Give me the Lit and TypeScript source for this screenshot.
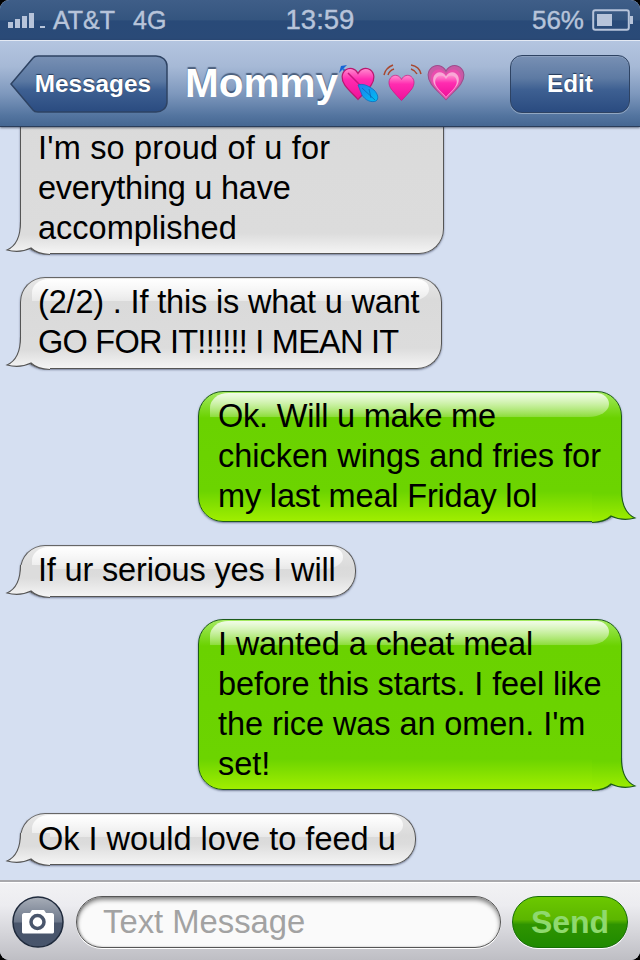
import { LitElement, html, css, svg } from "lit";
import { customElement } from "lit/decorators.js";

const heart = "M0 -9C-3 -15 -9 -16 -13 -13C-18 -9 -18 -2 -14 4C-10 10 -4 15 0 20C4 15 10 10 14 4C18 -2 18 -9 13 -13C9 -16 3 -15 0 -9Z";

interface Line { text: string; spacing: number }
interface Message { me: boolean; width: number; lines: Line[]; clipped?: boolean }

const messages: Message[] = [
  { me: false, clipped: true, width: 424, lines: [
    { text: "I'm so proud of u for", spacing: 0.2 },
    { text: "everything u have", spacing: -0.24 },
    { text: "accomplished", spacing: 0 },
  ] },
  { me: false, width: 422, lines: [
    { text: "(2/2) . If this is what u want", spacing: -0.17 },
    { text: "GO FOR IT!!!!!! I MEAN IT", spacing: -0.75 },
  ] },
  { me: true, width: 424, lines: [
    { text: "Ok. Will u make me", spacing: -0.22 },
    { text: "chicken wings and fries for", spacing: 0 },
    { text: "my last meal Friday lol", spacing: -0.17 },
  ] },
  { me: false, width: 336, lines: [{ text: "If ur serious yes I will", spacing: -0.17 }] },
  { me: true, width: 424, lines: [
    { text: "I wanted a cheat meal", spacing: -0.14 },
    { text: "before this starts. I feel like", spacing: -0.1 },
    { text: "the rice was an omen. I'm", spacing: -0.08 },
    { text: "set!", spacing: 0 },
  ] },
  { me: false, width: 396, lines: [{ text: "Ok I would love to feed u", spacing: 0 }] },
];

@customElement("app-root")
export class AppRoot extends LitElement {
  static styles = css`
    :host { display: block; width: 640px; height: 960px; background: #000; font-family: "Liberation Sans", Arial, sans-serif; overflow: hidden; }
    .screen { width: 640px; height: 960px; border-radius: 9px; overflow: hidden; display: flex; flex-direction: column; background: #d5dff1; }
    .status { height: 40px; flex: none; display: grid; grid-template-columns: 1fr auto 1fr; align-items: center; padding: 0 6px 0 8px; box-sizing: border-box;
      background: linear-gradient(#3f5e88 0%, #34557f 50%, #294a78 52%, #2a4a77 100%); color: #b7c4da; font-size: 25px; -webkit-text-stroke: 0.4px #b7c4da; }
    .status-left { display: flex; align-items: center; }
    .signal { display: block; margin-right: 7px; }
    .net { margin-left: 18px; }
    .time { font-size: 27.5px; margin-left: -2px; }
    .status-right { display: flex; justify-content: flex-end; align-items: center; gap: 8px; font-size: 26px; }
    .nav { height: 87px; flex: none; box-sizing: border-box; display: flex; align-items: center; justify-content: space-between; padding: 0 10px;
      border-top: 1px solid #e4eaf4; border-bottom: 1px solid #2a3d5a;
      background: linear-gradient(#b4c5e0 0%, #a6b9d6 30%, #7e98bd 62%, #53749f 88%, #456792 100%); box-shadow: 0 1px 2px rgba(30,40,60,.6); position: relative; z-index: 2; }
    .back { position: relative; width: 158px; height: 58px; flex: none; display: flex; align-items: center; justify-content: flex-end; padding-right: 17px; box-sizing: border-box; }
    .back svg { position: absolute; left: 0; top: 0; }
    .btn-label { position: relative; color: #fff; font-weight: 700; font-size: 24.3px; text-shadow: 0 -1px 1px rgba(20,40,70,.8); }
    .title { flex: 1; display: flex; align-items: center; padding-left: 17px; min-width: 0; }
    .title-text { color: #fff; font-weight: 700; font-size: 40.5px; text-shadow: 0 -2px 1px rgba(40,60,90,.7); }
    .emoji { display: block; flex: none; }
    .edit { width: 120px; height: 58px; flex: none; box-sizing: border-box; border-radius: 12px; border: 1.5px solid #2e4363; display: flex; align-items: center; justify-content: center;
      background: linear-gradient(#7890b4 0%, #5d7aa3 40%, #3e6092 60%, #2a4b80 100%); box-shadow: 0 1px 0 rgba(255,255,255,.35), inset 0 1px 0 rgba(255,255,255,.15); }
    .list { flex: 1; min-height: 0; overflow: hidden; display: flex; flex-direction: column; justify-content: flex-end; gap: 22.6px; padding: 0 18px 15px 20px; }
    .bubble { position: relative; flex: none; box-sizing: border-box; border-radius: 25px; font-size: 32.5px; line-height: 40px; color: #000; white-space: nowrap; border: 1px solid #555; box-shadow: 0 1px 2px rgba(40,50,80,.55); }
    .them { align-self: flex-start; padding: 4.5px 0 5.5px 17px; background: linear-gradient(#e8e8e8 0, #dadada 22px, #dcdcdc calc(100% - 20px), #f4f4f4 100%); border-top-color: #666; }
    .me { align-self: flex-end; padding: 4px 0 5px 19px; background: linear-gradient(#a4ea60 0, #6ad200 26px, #6cd400 calc(100% - 30px), #a0ee00 100%); border-color: #1d5a1c; }
    .clipped { padding-top: 60px; }
    .gloss { position: absolute; top: 1px; left: 11px; right: 12px; border-radius: 20px 14px 22px 0 / 16px 12px 14px 0; }
    .clipped .gloss { display: none; }
    .them .gloss { height: 22px; background: linear-gradient(rgba(255,255,255,.98), rgba(255,255,255,.4)); }
    .me .gloss { height: 24px; background: linear-gradient(rgba(255,255,255,.85), rgba(255,255,255,.22)); }
    .line { position: relative; display: block; }
    .tail { position: absolute; bottom: -2px; overflow: visible; }
    .them .tail { left: -15px; }
    .me .tail { right: -15px; transform: scaleX(-1); }
    .bar { height: 80px; flex: none; box-sizing: border-box; display: flex; align-items: flex-start; gap: 11px; padding: 14px 12px 0 12px; border-top: 2px solid #a8a8ac;
      background: linear-gradient(#f2f2f4 0%, #ececf0 30%, #bebec4 100%); box-shadow: inset 0 1px 0 #fff; }
    .camera { width: 52px; height: 52px; flex: none; display: block; margin-right: 1px; }
    .field { flex: 1; height: 52px; box-sizing: border-box; border-radius: 26px; border: 1.5px solid #555; background: #fafafa; box-shadow: inset 0 3px 4px rgba(0,0,0,.45), inset 1px 0 2px rgba(0,0,0,.25), 0 1px 0 #fff; display: flex; align-items: center; padding-left: 26px; font-size: 32.8px; color: #a2a2a2; }
    .send { width: 116px; height: 52px; flex: none; box-sizing: border-box; border-radius: 26px; border: 1.5px solid #166e06; display: flex; align-items: center; justify-content: center; font-weight: 700; font-size: 32px; color: #8fd96e;
      background: linear-gradient(#6cc800 0%, #5cb600 45%, #2f9400 55%, #1f8a00 100%); box-shadow: 0 1px 0 #fff; }
  `;

  private tail(m: Message) {
    const id = m.me ? "tg" : "tw";
    const top = m.me ? "#6cd400" : "#dcdcdc";
    const bottom = m.me ? "#a0ee00" : "#f6f6f6";
    const edge = m.me ? "#1d5a1c" : "#555";
    const start = m.me ? 6 : 16;
    return html`<svg class="tail" width="44" height="36" viewBox="0 0 44 36">
      <defs><linearGradient id="${id}" gradientUnits="userSpaceOnUse" x1="0" y1="${start}" x2="0" y2="35"><stop offset="0" stop-color="${top}"/><stop offset="1" stop-color="${bottom}"/></linearGradient></defs>
      <path d="M14.500 3C14.500 17 10 27 1 31C8 33 17 33 25 29C29 33 34 35 44 35.500L44 3Z" fill="url(#${id})"/>
      <path d="M14.500 3C14.500 17 10 27 1 31C8 33 17 33 25 29C29 33 34 35 44 35.500" fill="none" stroke="${edge}" stroke-width="1.100"/>
    </svg>`;
  }

  private bubble(m: Message) {
    return html`<div class="bubble ${m.me ? "me" : "them"} ${m.clipped ? "clipped" : ""}" style="width:${m.width}px">
      <span class="gloss"></span>
      ${this.tail(m)}
      ${m.lines.map((l) => html`<span class="line" style="letter-spacing:${l.spacing}px">${l.text}</span>`)}
    </div>`;
  }

  private hearts() {
    return svg`
      <defs>
        <linearGradient id="pk" x1="0" y1="0" x2="0" y2="1"><stop offset="0" stop-color="#ff8fd0"/><stop offset=".35" stop-color="#ff2cb0"/><stop offset="1" stop-color="#f0109a"/></linearGradient>
        <linearGradient id="bl" x1="0" y1="0" x2="1" y2="1"><stop offset="0" stop-color="#1f7cf0"/><stop offset="1" stop-color="#00c0f0"/></linearGradient>
      </defs>
      <path d="M5 15L12 22" stroke="#1a78d8" stroke-width="2"/>
      <path d="M1 19L3 12L9 11L6 14L4 16Z" fill="#1565d6"/>
      <g transform="translate(20 27.500) scale(.94 .9)"><path d="${heart}" fill="url(#pk)" stroke="#b8186f" stroke-width="1.300"/></g>
      <path d="M10 19L24 33" stroke="#c8167f" stroke-width="1.500"/>
      <path d="M20 31C25 29 31 32 36 36C40 40 41 45 38 47C33 49 27 46 24 41Z" fill="url(#bl)" stroke="#0a6fc0" stroke-width=".8"/>
      <path d="M24 34L37 46M31 35L33 44" stroke="#0a5fb0" stroke-width=".7" fill="none"/>
      <g transform="translate(63.500 32) scale(.74 .73)"><path d="${heart}" fill="url(#pk)" stroke="#c81a80" stroke-width="1"/></g>
      <path d="M46 21C47 16 50 13 55 11M50 21C51 18 53 16 56 15M83 20C82 15 79 12 73 11M79 20C78 18 76 16 73 15" fill="none" stroke="#a8482f" stroke-width="1.500"/>
      <g transform="translate(108 26) scale(1.06 .99)"><path d="${heart}" fill="#c85aa5" stroke="#9c4d8c" stroke-width="1"/></g>
      <g transform="translate(108 28) scale(.88 .86)"><path d="${heart}" fill="#ea4cae"/></g>
      <g transform="translate(108 29) scale(.76 .74)"><path d="${heart}" fill="#f9a8d6"/></g>
      <g transform="translate(108 30.500) scale(.64 .62)"><path d="${heart}" fill="url(#pk)"/></g>
    `;
  }

  render() {
    return html`<div class="screen">
      <div class="status">
        <div class="status-left">
          <svg class="signal" width="38" height="20" viewBox="0 0 38 20" fill="#b7c4da">
            <rect x="0" y="12" width="5" height="6"/><rect x="7" y="9" width="5" height="9"/><rect x="14" y="6" width="5" height="12"/><rect x="21" y="3" width="5" height="15"/><rect x="32" y="16" width="5" height="2"/>
          </svg>
          <span>AT&amp;T</span><span class="net">4G</span>
        </div>
        <div class="time">13:59</div>
        <div class="status-right">
          <span>56%</span>
          <svg width="42" height="22" viewBox="0 0 42 22"><rect x="1.200" y="1.200" width="35.600" height="19.600" rx="2" fill="none" stroke="#b7c4da" stroke-width="2"/><rect x="5" y="5" width="15" height="12" fill="#b7c4da"/><rect x="38" y="7" width="3" height="8" fill="#b7c4da"/></svg>
        </div>
      </div>
      <div class="nav">
        <div class="back">
          <svg width="158" height="58" viewBox="0 0 158 58">
            <defs><linearGradient id="bk" x1="0" y1="0" x2="0" y2="1"><stop offset="0" stop-color="#7890b4"/><stop offset=".45" stop-color="#5a78a2"/><stop offset=".6" stop-color="#3e6092"/><stop offset="1" stop-color="#2a4b80"/></linearGradient></defs>
            <path d="M1 29L23 3C24 1.500 26 1 28 1H146C152 1 157 5 157 11V47C157 53 152 57 146 57H28C26 57 24 56.500 23 55Z" fill="url(#bk)" stroke="#2e4363" stroke-width="1.500"/>
          </svg>
          <span class="btn-label">Messages</span>
        </div>
        <div class="title">
          <span class="title-text">Mommy</span>
          <svg class="emoji" width="128" height="60" viewBox="0 0 128 60">${this.hearts()}</svg>
        </div>
        <div class="edit"><span class="btn-label">Edit</span></div>
      </div>
      <div class="list">${messages.map((m) => this.bubble(m))}</div>
      <div class="bar">
        <svg class="camera" viewBox="0 0 52 52">
          <defs><linearGradient id="cm" x1="0" y1="0" x2="0" y2="1"><stop offset="0" stop-color="#a8aeb8"/><stop offset=".5" stop-color="#6c778a"/><stop offset=".52" stop-color="#4a566c"/><stop offset="1" stop-color="#47546b"/></linearGradient></defs>
          <circle cx="26" cy="26" r="25" fill="url(#cm)" stroke="#1f2a3c" stroke-width="1.500"/>
          <path d="M10 19C10 18 11 17 12 17H18L20 14H32L34 17H40C41 17 42 18 42 19V36C42 37 41 37.500 40 37.500H12C11 37.500 10 37 10 36Z" fill="#fff"/>
          <circle cx="25.500" cy="26" r="6.500" fill="none" stroke="#4a566c" stroke-width="3.500"/>
        </svg>
        <div class="field">Text Message</div>
        <div class="send">Send</div>
      </div>
    </div>`;
  }
}
